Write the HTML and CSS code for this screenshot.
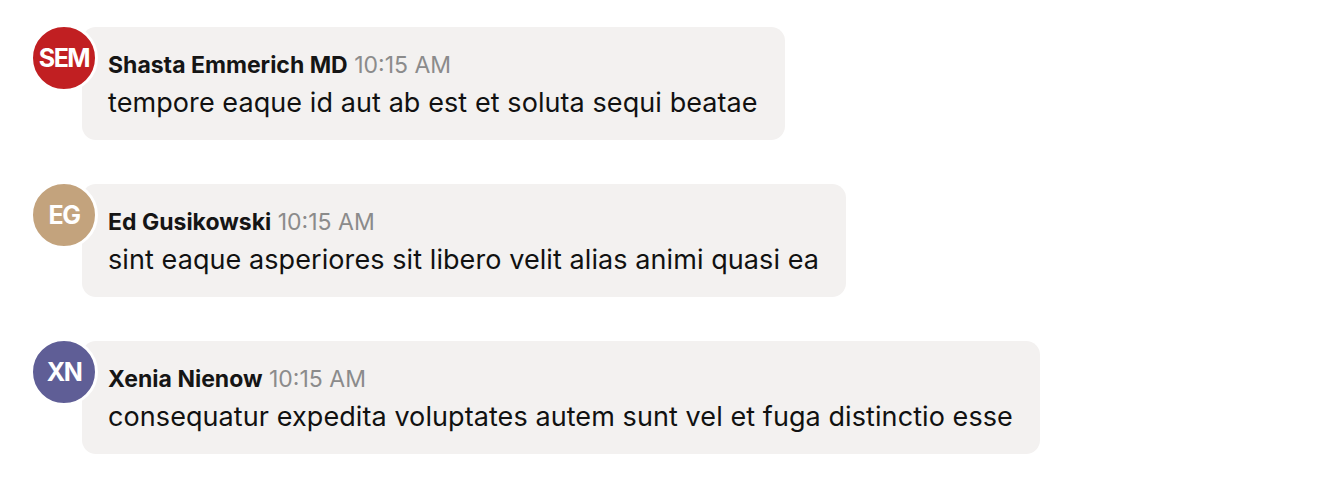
FILE: index.html
```html
<!DOCTYPE html>
<html>
<head>
<meta charset="utf-8">
<link rel="stylesheet" href="styles.css">
</head>
<body>
<div class="chat">
  <div class="message">
    <div class="avatar avatar-red">SEM</div>
    <div class="bubble">
      <div class="meta"><span class="name">Shasta Emmerich MD</span> <span class="time">10:15 AM</span></div>
      <div class="text">tempore eaque id aut ab est et soluta sequi beatae</div>
    </div>
  </div>
  <div class="message">
    <div class="avatar avatar-tan">EG</div>
    <div class="bubble">
      <div class="meta"><span class="name">Ed Gusikowski</span> <span class="time">10:15 AM</span></div>
      <div class="text">sint eaque asperiores sit libero velit alias animi quasi ea</div>
    </div>
  </div>
  <div class="message">
    <div class="avatar avatar-purple">XN</div>
    <div class="bubble">
      <div class="meta"><span class="name">Xenia Nienow</span> <span class="time">10:15 AM</span></div>
      <div class="text">consequatur expedita voluptates autem sunt vel et fuga distinctio esse</div>
    </div>
  </div>
</div>
</body>
</html>
```
FILE: styles.css
```css
html, body {
  margin: 0;
  padding: 0;
  background: #ffffff;
}
body {
  font-family: Inter, "Liberation Sans", Arial, sans-serif;
  color: #111111;
}
.chat {
  display: flex;
  flex-direction: column;
  gap: 44px;
  padding: 27px 0 0 30px;
}
.message {
  display: flex;
  align-items: flex-start;
}
.avatar {
  position: relative;
  z-index: 1;
  flex: none;
  width: 62px;
  height: 62px;
  margin-top: -3px;
  margin-right: -16px;
  border: 3px solid #ffffff;
  border-radius: 50%;
  display: flex;
  align-items: center;
  justify-content: center;
  color: #ffffff;
  font-weight: 700;
  font-size: 25px;
  letter-spacing: -1.5px;
}
.avatar-red { background: #c11f22; }
.avatar-tan { background: #c3a37d; }
.avatar-purple { background: #5f5e96; }
.bubble {
  background: #f3f1f0;
  border-radius: 14px;
  padding: 24px 27px 21px 26px;
}
.meta {
  font-size: 23px;
  line-height: 28px;
  white-space: nowrap;
}
.name {
  font-weight: 700;
  color: #151515;
}
.time {
  color: #8b8b8b;
}
.text {
  margin-top: 8px;
  font-size: 27px;
  line-height: 32px;
  letter-spacing: 0.08px;
  white-space: nowrap;
}
```
